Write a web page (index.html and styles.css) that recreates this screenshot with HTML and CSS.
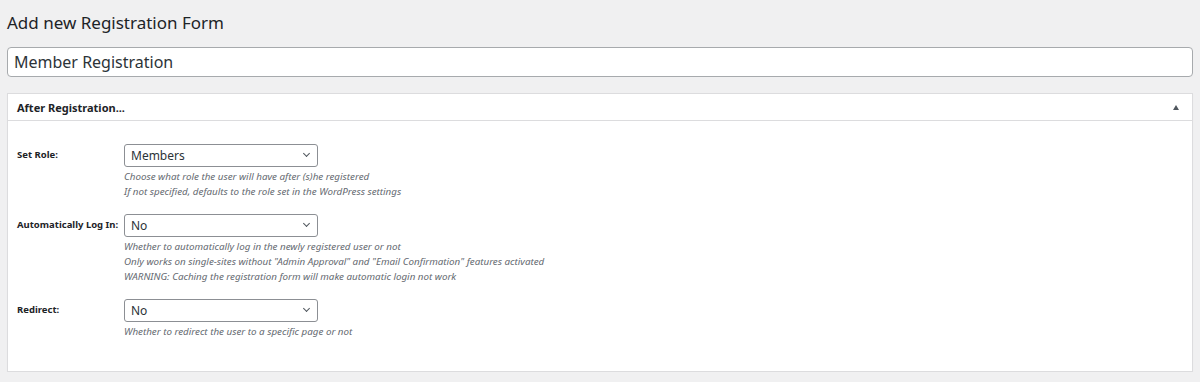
FILE: index.html
```html
<!DOCTYPE html>
<html lang="en">
<head>
  <meta charset="UTF-8" />
  <title>Add new Registration Form</title>
  <link rel="stylesheet" href="styles.css">
</head>
<body>

<div class="wrap">
  <h1>Add new Registration Form</h1>
  <input type="text" class="title-input" value="Member Registration" />

  <div class="postbox">
    <div class="postbox-header">
      <h2>After Registration...</h2>
      <span class="toggle-arrow"></span>
    </div>
    <div class="inside">
      <div class="field">
        <label>Set Role:</label>
        <div class="control">
          <div class="select">Members</div>
          <p class="description">Choose what role the user will have after (s)he registered<br>If not specified, defaults to the role set in the WordPress settings</p>
        </div>
      </div>
      <div class="field">
        <label>Automatically Log In:</label>
        <div class="control">
          <div class="select">No</div>
          <p class="description">Whether to automatically log in the newly registered user or not<br>Only works on single-sites without "Admin Approval" and "Email Confirmation" features activated<br>WARNING: Caching the registration form will make automatic login not work</p>
        </div>
      </div>
      <div class="field">
        <label>Redirect:</label>
        <div class="control">
          <div class="select">No</div>
          <p class="description">Whether to redirect the user to a specific page or not</p>
        </div>
      </div>
    </div>
  </div>
</div>

</body>
</html>
```

FILE: styles.css
```css
body {
  font-family: "Noto Sans", "Open Sans", sans-serif;
  background: #f0f0f1;
  color: #1d2327;
  margin: 0;
}
.wrap {
  padding: 9px 7px 0 7px;
}
h1 {
  font-size: 17px;
  font-weight: 400;
  margin: 0 0 10px 0;
  line-height: 28px;
}
.title-input {
  display: block;
  box-sizing: border-box;
  width: 100%;
  height: 30px;
  padding: 0 6px;
  border: 1px solid #a7aaad;
  border-radius: 4px;
  font-family: inherit;
  font-size: 16px;
  color: #2c3338;
  background: #fff;
  margin: 0;
}
.postbox {
  margin-top: 16px;
  background: #fff;
  border: 1px solid #dcdcde;
  box-shadow: 0 1px 1px rgba(0, 0, 0, 0.04);
}
.postbox-header {
  display: flex;
  align-items: center;
  justify-content: space-between;
  height: 26px;
  border-bottom: 1px solid #dcdcde;
  padding: 0 13px 0 9px;
}
.postbox-header h2 {
  font-size: 11px;
  font-weight: 700;
  margin: 0;
}
.toggle-arrow {
  width: 0;
  height: 0;
  border-left: 3px solid transparent;
  border-right: 3px solid transparent;
  border-bottom: 5px solid #50575e;
}
.inside {
  padding: 23px 9px 32px 9px;
}
.field {
  display: flex;
  margin-bottom: 15px;
}
.field:last-child {
  margin-bottom: 0;
}
.field label {
  width: 107px;
  flex-shrink: 0;
  font-size: 9.5px;
  font-weight: 700;
  padding-top: 4px;
}
.select {
  box-sizing: border-box;
  width: 194px;
  height: 23px;
  border: 1px solid #8c8f94;
  border-radius: 3px;
  padding: 0 6px;
  font-size: 12px;
  line-height: 21px;
  color: #2c3338;
  position: relative;
}
.select::after {
  content: "";
  position: absolute;
  right: 8px;
  top: 6px;
  width: 4px;
  height: 4px;
  border-right: 1.5px solid #50575e;
  border-bottom: 1.5px solid #50575e;
  transform: rotate(45deg);
}
.description {
  margin: 2px 0 0 0;
  font-size: 9.8px;
  font-style: italic;
  line-height: 15px;
  color: #646970;
}
```
